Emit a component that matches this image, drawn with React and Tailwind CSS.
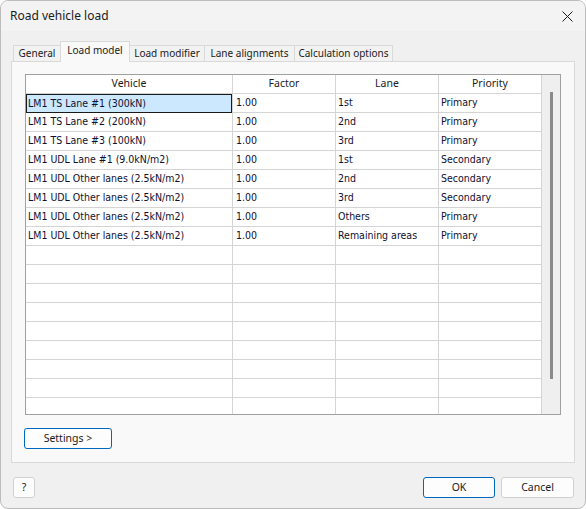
import { useState } from 'react';

const rows = [
  ['LM1 TS Lane #1 (300kN)', '1.00', '1st', 'Primary'],
  ['LM1 TS Lane #2 (200kN)', '1.00', '2nd', 'Primary'],
  ['LM1 TS Lane #3 (100kN)', '1.00', '3rd', 'Primary'],
  ['LM1 UDL Lane #1 (9.0kN/m2)', '1.00', '1st', 'Secondary'],
  ['LM1 UDL Other lanes (2.5kN/m2)', '1.00', '2nd', 'Secondary'],
  ['LM1 UDL Other lanes (2.5kN/m2)', '1.00', '3rd', 'Secondary'],
  ['LM1 UDL Other lanes (2.5kN/m2)', '1.00', 'Others', 'Primary'],
  ['LM1 UDL Other lanes (2.5kN/m2)', '1.00', 'Remaining areas', 'Primary']
];

const tabs = [
  { name: 'General', width: 'w-[48px]' },
  { name: 'Load model', width: 'w-[70px]' },
  { name: 'Load modifier', width: 'w-[76px]' },
  { name: 'Lane alignments', width: 'w-[91px]' },
  { name: 'Calculation options', width: 'w-[99px]' }
];

const ui = "font-['Noto_Sans',sans-serif] text-[10.5px] text-[#1b1b1b]";
const cell = "font-['DejaVu_Sans_Condensed','DejaVu_Sans',sans-serif] text-[10.5px] text-[#101030]";

function App() {
  const [activeTab, setActiveTab] = useState('Load model');
  const blanks = Array.from({ length: 9 });

  return (
    <div className="h-[509px] w-[586px] bg-white">
      <div className={`flex h-full flex-col overflow-hidden rounded-[8px] border border-[#bdbdbd] bg-[#f0f0f0] ${ui}`}>
        <div className="flex h-[30px] shrink-0 items-center justify-between bg-[#f3f3f3] pl-[9px] pr-[10px]">
          <span className="text-[12px]">Road vehicle load</span>
          <svg width="11" height="11" viewBox="0 0 11 11" className="mr-[2px]">
            <path d="M0.5 0.5 L10.5 10.5 M10.5 0.5 L0.5 10.5" stroke="#1b1b1b" strokeWidth="1" />
          </svg>
        </div>

        <div className="mt-[10px] flex h-[20px] items-end pl-[12px] text-[10px]">
          {tabs.map((tab) => {
            const active = tab.name === activeTab;
            return (
              <button
                key={tab.name}
                onClick={() => setActiveTab(tab.name)}
                className={
                  active
                    ? `relative z-10 -mb-px -ml-px h-[21px] border border-b-0 border-[#d9d9d9] bg-[#f9f9f9] pb-[3px] ${tab.width}`
                    : `-ml-px h-[16px] border border-b-0 border-[#d9d9d9] bg-[#f2f2f2] first:ml-0 ${tab.width}`
                }
              >
                {tab.name}
              </button>
            );
          })}
        </div>

        <div className="mx-[10px] flex h-[402px] flex-col border border-[#d9d9d9] bg-[#f9f9f9] px-[13px] pt-[12px]">
          <div className="flex h-[341px] overflow-hidden border border-[#a0a0a0] bg-white">
            <div className="flex w-[516px] flex-col">
              <div className="flex h-[19px] shrink-0 border-b border-[#d4d4d4]">
                {['Vehicle', 'Factor', 'Lane', 'Priority'].map((h, i) => (
                  <div
                    key={h}
                    className={`flex items-center justify-center border-r border-[#d4d4d4] ${i === 0 ? 'w-[207px]' : 'w-[103px]'}`}
                  >
                    {h}
                  </div>
                ))}
              </div>
              {rows.map((r, idx) => (
                <div key={idx} className={`flex h-[19px] shrink-0 border-b border-[#d4d4d4] ${cell}`}>
                  {idx === 0 ? (
                    <div className="flex w-[207px] items-center border-r border-[#d4d4d4]">
                      <div className="flex h-[19px] w-[206px] -mb-px items-center border border-[#1a1a1a] bg-[#cce8ff] pl-[1px]">
                        {r[0]}
                      </div>
                    </div>
                  ) : (
                    <div className="flex w-[207px] items-center border-r border-[#d4d4d4] pl-[2px]">{r[0]}</div>
                  )}
                  <div className="flex w-[103px] items-center border-r border-[#d4d4d4] pl-[3px]">{r[1]}</div>
                  <div className="flex w-[103px] items-center border-r border-[#d4d4d4] pl-[2px]">{r[2]}</div>
                  <div className="flex w-[103px] items-center border-r border-[#d4d4d4] pl-[2px]">{r[3]}</div>
                </div>
              ))}
              {blanks.map((_, idx) => (
                <div key={`b${idx}`} className="flex h-[19px] shrink-0 border-b border-[#d4d4d4]">
                  <div className="w-[207px] border-r border-[#d4d4d4]" />
                  <div className="w-[103px] border-r border-[#d4d4d4]" />
                  <div className="w-[103px] border-r border-[#d4d4d4]" />
                  <div className="w-[103px] border-r border-[#d4d4d4]" />
                </div>
              ))}
            </div>
            <div className="flex flex-1 justify-center bg-[#efefef] pt-[17px]">
              <div className="ml-[1px] h-[287px] w-[3px] bg-[#8a8a8a]" />
            </div>
          </div>

          <div className="-ml-px mt-[13px]">
            <button className="h-[21px] w-[88px] rounded-[3px] border border-[#0067c0] bg-[#fdfdfd]">Settings &gt;</button>
          </div>
        </div>

        <div className="mt-[14px] flex items-center justify-between pl-[12px] pr-[11px]">
          <button className="h-[21px] w-[22px] rounded-[3px] border border-[#d0d0d0] bg-[#fdfdfd]">?</button>
          <div className="flex gap-[6px]">
            <button className="h-[21px] w-[72px] rounded-[3px] border border-[#0067c0] bg-[#fdfdfd]">OK</button>
            <button className="h-[21px] w-[73px] rounded-[3px] border border-[#d0d0d0] bg-[#fdfdfd]">Cancel</button>
          </div>
        </div>
      </div>
    </div>
  );
}

export default App;
